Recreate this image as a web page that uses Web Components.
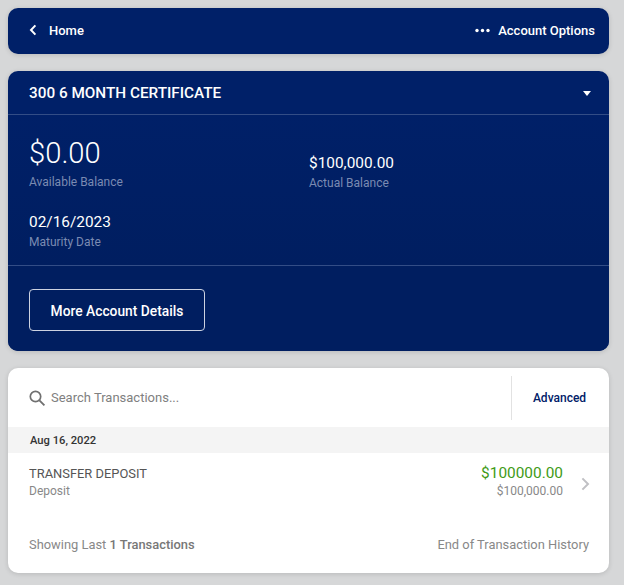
<!DOCTYPE html>
<html>
<head>
<meta charset="utf-8">
<style>
  html, body { margin: 0; height: 100%; }
  body {
    background: #d6d7d8;
    font-family: Roboto, "Liberation Sans", sans-serif;
    padding: 8px 15px 12px 8px;
    box-sizing: border-box;
    display: flex;
    flex-direction: column;
    gap: 17px;
  }
  body > * { flex: none; }
</style>
</head>
<body>
<nav-bar></nav-bar>
<account-card></account-card>
<transactions-card></transactions-card>
<script>
class NavBar extends HTMLElement {
  constructor() {
    super();
    this.attachShadow({ mode: 'open' });
  }

  connectedCallback() {
    this.shadowRoot.innerHTML = `
      <style>
        :host {
          display: flex;
          align-items: center;
          justify-content: space-between;
          box-sizing: border-box;
          height: 46px;
          padding: 0 14px 2px 21px;
          background: #002068;
          border-radius: 10px;
          color: #fff;
          font-size: 13px;
          font-weight: 500;
          box-shadow: 0 1px 5px rgba(0, 0, 0, 0.14);
        }
        .side { display: flex; align-items: center; }
        .back { margin-right: 12px; display: block; }
        .dots { margin-right: 8px; display: block; }
      </style>
      <div class="side">
        <svg class="back" width="8" height="12" viewBox="0 0 8 12"><path d="M6.4 1.4 2 6l4.4 4.6" fill="none" stroke="#fff" stroke-width="2"/></svg>
        <span>Home</span>
      </div>
      <div class="side">
        <svg class="dots" width="15" height="5" viewBox="0 0 15 5"><circle cx="2" cy="2.5" r="1.7" fill="#fff"/><circle cx="7.5" cy="2.5" r="1.7" fill="#fff"/><circle cx="13" cy="2.5" r="1.7" fill="#fff"/></svg>
        <span>Account Options</span>
      </div>
    `;
  }
}

class BalanceItem extends HTMLElement {
  constructor() {
    super();
    this.attachShadow({ mode: 'open' });
  }

  connectedCallback() {
    this.shadowRoot.innerHTML = `
      <style>
        :host { display: block; }
        .value { color: #fff; font-size: var(--value-size, 15.4px); font-weight: var(--value-weight, 400); line-height: var(--value-line, 20px); }
        .label { color: #7b8bb2; font-size: 12px; line-height: 16px; margin-top: var(--label-gap, 2px); }
      </style>
      <div class="value"><slot name="value"></slot></div>
      <div class="label"><slot name="label"></slot></div>
    `;
  }
}

class AccountCard extends HTMLElement {
  constructor() {
    super();
    this.attachShadow({ mode: 'open' });
  }

  connectedCallback() {
    this.shadowRoot.innerHTML = `
      <style>
        :host {
          display: block;
          background: #002068;
          border-radius: 10px;
          color: #fff;
          overflow: hidden;
          box-shadow: 0 1px 5px rgba(0, 0, 0, 0.14);
        }
        .head {
          display: flex;
          align-items: center;
          justify-content: space-between;
          height: 43px;
          padding: 0 18px 0 21px;
          font-size: 15.3px;
          font-weight: 500;
          border-bottom: 1px solid #334d86;
        }
        .caret { width: 0; height: 0; border-left: 4.5px solid transparent; border-right: 4.5px solid transparent; border-top: 5px solid #fff; margin-top: 2px; }
        .balances {
          display: grid;
          grid-template-columns: 280px 1fr;
          padding: 20px 21px 15px;
          row-gap: 21px;
          border-bottom: 1px solid #334d86;
          background: linear-gradient(#002068, #001e60);
        }
        .big { --value-size: 29.2px; --value-weight: 300; --value-line: 36px; --label-gap: 3px; }
        .actual { padding-top: 18px; }
        .foot { padding: 23px 21px 20px; background: #001e60; }
        button {
          display: block;
          width: 176px;
          height: 42px;
          background: transparent;
          border: 1px solid #ccd2e1;
          border-radius: 4px;
          color: #fff;
          font: 500 13.8px Roboto, "Liberation Sans", sans-serif;
          padding: 2px 0 0;
        }
      </style>
      <div class="head">
        <span>300 6 MONTH CERTIFICATE</span>
        <div class="caret"></div>
      </div>
      <div class="balances">
        <balance-item class="big"><span slot="value">$0.00</span><span slot="label">Available Balance</span></balance-item>
        <balance-item class="actual"><span slot="value">$100,000.00</span><span slot="label">Actual Balance</span></balance-item>
        <balance-item><span slot="value">02/16/2023</span><span slot="label">Maturity Date</span></balance-item>
      </div>
      <div class="foot"><button>More Account Details</button></div>
    `;
  }
}

class TransactionRow extends HTMLElement {
  constructor() {
    super();
    this.attachShadow({ mode: 'open' });
  }

  connectedCallback() {
    this.shadowRoot.innerHTML = `
      <style>
        :host {
          display: flex;
          align-items: flex-start;
          justify-content: space-between;
          box-sizing: border-box;
          padding: 12px 19px 0 21px;
          height: 60px;
        }
        .title { color: #555; font-size: 12.9px; line-height: 18px; }
        .type { color: #888; font-size: 12px; line-height: 16px; }
        .right { display: flex; align-items: center; }
        .amounts { text-align: right; }
        .amount { color: #3f9b18; font-size: 15.4px; line-height: 16px; }
        .balance { color: #888; font-size: 12px; line-height: 16px; margin-top: 2px; }
        svg { display: block; margin: 3px 0 0 18px; }
      </style>
      <div>
        <div class="title">${this.getAttribute('title')}</div>
        <div class="type">${this.getAttribute('type')}</div>
      </div>
      <div class="right">
        <div class="amounts">
          <div class="amount">${this.getAttribute('amount')}</div>
          <div class="balance">${this.getAttribute('balance')}</div>
        </div>
        <svg width="9" height="14" viewBox="0 0 9 14"><path d="M1.4 1.4 7 7l-5.6 5.6" fill="none" stroke="#c0c0c4" stroke-width="2"/></svg>
      </div>
    `;
  }
}

class TransactionsCard extends HTMLElement {
  constructor() {
    super();
    this.attachShadow({ mode: 'open' });
  }

  connectedCallback() {
    this.shadowRoot.innerHTML = `
      <style>
        :host {
          display: block;
          background: #fff;
          border-radius: 10px;
          overflow: hidden;
          box-shadow: 0 1px 5px rgba(0, 0, 0, 0.14);
        }
        .search {
          display: flex;
          align-items: center;
          height: 59px;
          padding: 0 0 0 20px;
        }
        .search svg { display: block; margin-right: -1px; }
        .placeholder { flex: 1; color: #808080; font-size: 13px; }
        .advanced {
          width: 98px;
          height: 44px;
          box-sizing: border-box;
          border-left: 1px solid #e2e2e2;
          padding-right: 2px;
          display: flex;
          align-items: center;
          justify-content: center;
          color: #002068;
          font-size: 12px;
          font-weight: 500;
        }
        .date {
          height: 26px;
          line-height: 28px;
          background: #f4f4f4;
          padding: 0 22px;
          color: #333;
          font-size: 11.2px;
          font-weight: 500;
        }
        .foot {
          display: flex;
          justify-content: space-between;
          box-sizing: border-box;
          padding: 24px 20px 0 21px;
          height: 60px;
          color: #888;
          font-size: 12.9px;
          line-height: 16px;
        }
        b { font-weight: 500; color: #777; }
      </style>
      <div class="search">
        <svg width="24" height="18" viewBox="0 0 24 18"><circle cx="7.5" cy="7.5" r="5.2" fill="none" stroke="#707070" stroke-width="1.7"/><path d="M11.4 11.4 16.4 16.4" fill="none" stroke="#707070" stroke-width="1.9"/></svg>
        <div class="placeholder">Search Transactions...</div>
        <div class="advanced">Advanced</div>
      </div>
      <div class="date">Aug 16, 2022</div>
      <transaction-row title="TRANSFER DEPOSIT" type="Deposit" amount="$100000.00" balance="$100,000.00"></transaction-row>
      <div class="foot">
        <span>Showing Last <b>1 Transactions</b></span>
        <span>End of Transaction History</span>
      </div>
    `;
  }
}

customElements.define('balance-item', BalanceItem);
customElements.define('transaction-row', TransactionRow);
customElements.define('nav-bar', NavBar);
customElements.define('account-card', AccountCard);
customElements.define('transactions-card', TransactionsCard);
</script>
</body>
</html>
